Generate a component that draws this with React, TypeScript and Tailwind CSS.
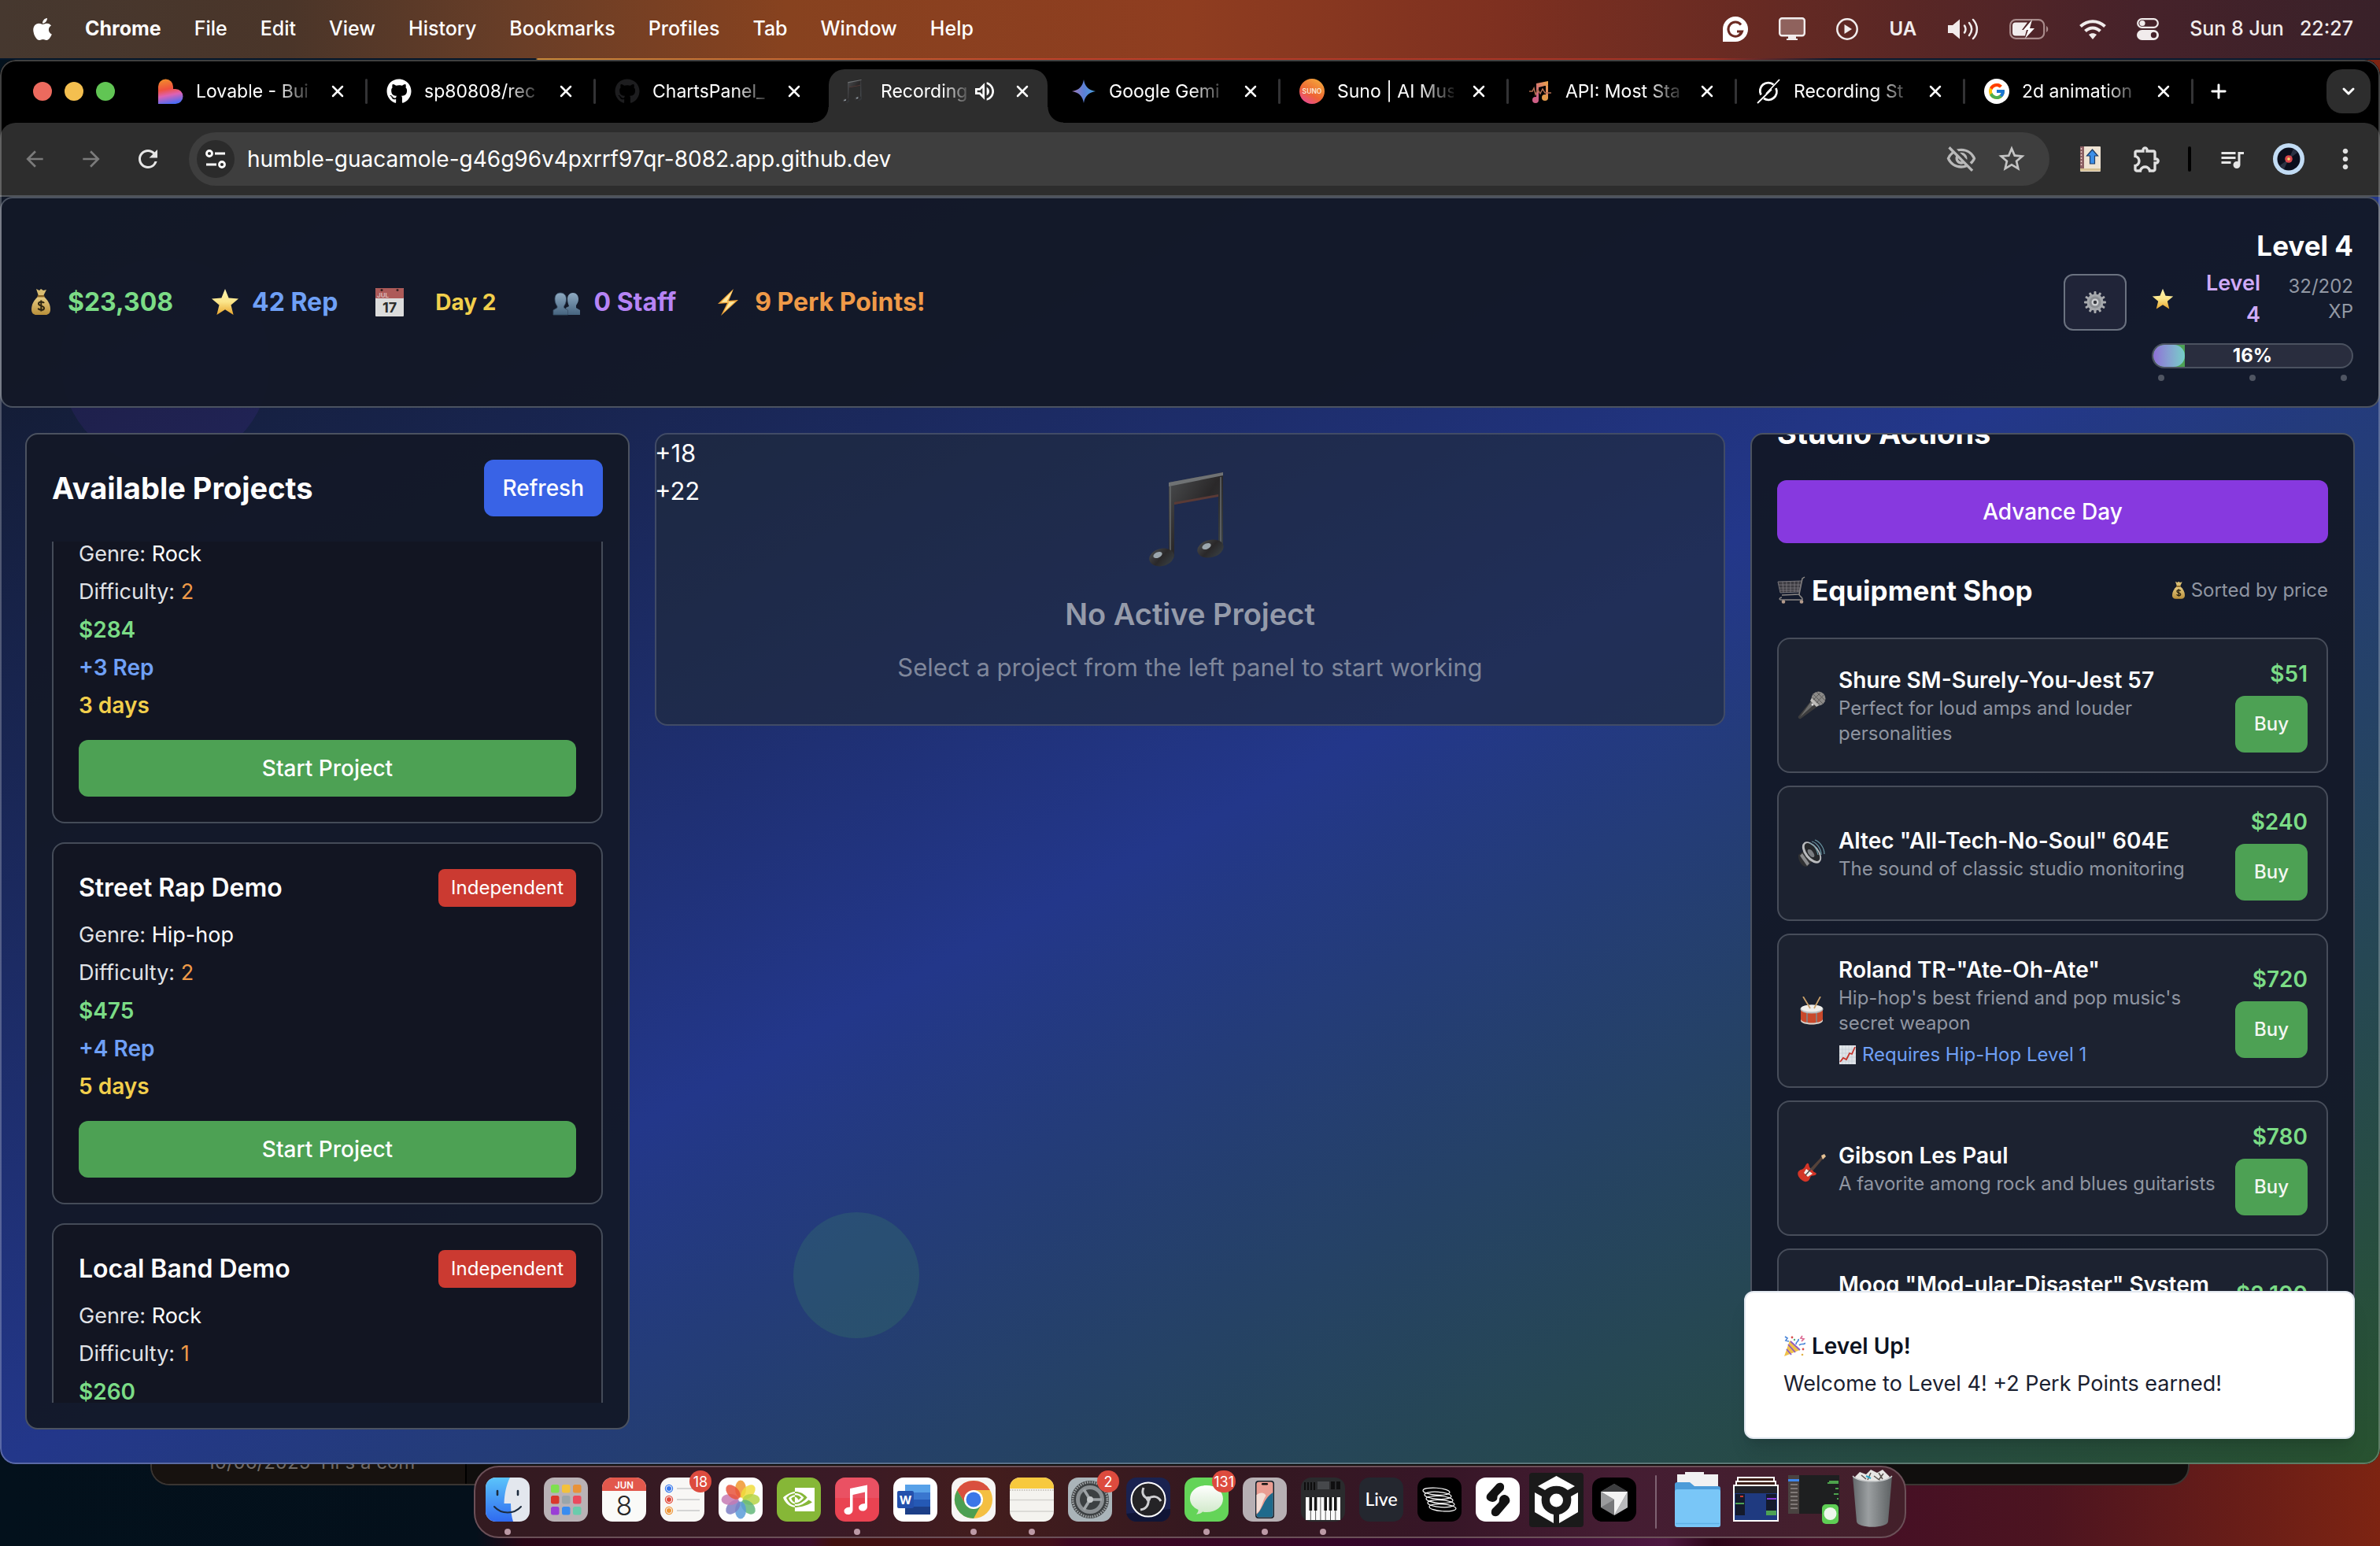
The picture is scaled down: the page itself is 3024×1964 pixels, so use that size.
import React from "react";
import { FaApple, FaGithub } from "react-icons/fa";
import { FcGoogle } from "react-icons/fc";
import {
  MdArrowBack,
  MdArrowForward,
  MdRefresh,
  MdOutlineVisibilityOff,
  MdStarBorder,
  MdOutlineExtension,
  MdQueueMusic,
  MdMoreVert,
  MdOutlineVolumeUp,
} from "react-icons/md";
import { BsNvidia } from "react-icons/bs";
import { X, Plus, ChevronDown } from "lucide-react";

/* ---------- Emoji-style drawings ---------- */

function Bag({ className = "size-9" }: { className?: string }) {
  return (
    <svg viewBox="0 0 36 36" className={className} aria-hidden="true">
      <defs>
        <linearGradient id="bag" x1="0" y1="0" x2="0" y2="1">
          <stop offset="0" stopColor="#e9cf86" />
          <stop offset="1" stopColor="#b98f3a" />
        </linearGradient>
      </defs>
      <path d="M12 1l4 2 2-2 3 2 4-1-4 8h-6z" fill="#d9bd72" />
      <path d="M15 10h6c6 5 9 11 9 17 0 5-3 7-6 7H12c-3 0-6-2-6-7 0-6 3-12 9-17z" fill="url(#bag)" />
      <rect x="13.500" y="9" width="9" height="2.600" rx="1.300" fill="#8a6424" />
      <path d="M22 19c-1-2-7-2.500-7 .8 0 3.600 7 2 7 5.600 0 3.300-6.500 3-7.500.3M18.300 15.500v14" fill="none" stroke="#2d2410" strokeWidth="2" />
    </svg>
  );
}

function Star({ className = "size-9" }: { className?: string }) {
  return (
    <svg viewBox="0 0 36 36" className={className} aria-hidden="true">
      <defs>
        <linearGradient id="star" x1="0" y1="0" x2="0" y2="1">
          <stop offset="0" stopColor="#fff3b0" />
          <stop offset=".5" stopColor="#fbe58a" />
          <stop offset="1" stopColor="#e8a52c" />
        </linearGradient>
      </defs>
      <path d="M18 1l4.600 11.500L35 13.500l-9.500 8L28.600 34 18 27.200 7.400 34l3.100-12.500L1 13.500l12.400-1z" fill="url(#star)" />
    </svg>
  );
}

function CalendarIcon() {
  return (
    <svg viewBox="0 0 36 36" className="size-9" aria-hidden="true">
      <rect width="36" height="36" rx="1" fill="#dcdcdc" />
      <rect width="36" height="13" rx="1" fill="#ad5a58" />
      <circle cx="8" cy="2.500" r="1.500" fill="#3a2020" />
      <circle cx="28" cy="2.500" r="1.500" fill="#3a2020" />
      <text x="2" y="11.500" fontSize="8" fill="#d9b4b4" fontFamily="Inter">JUL</text>
      <text x="18" y="31" fontSize="18" textAnchor="middle" fill="#2c2c2c" fontFamily="Inter">17</text>
    </svg>
  );
}

function People() {
  return (
    <svg viewBox="0 0 36 36" className="size-9" aria-hidden="true">
      <defs>
        <linearGradient id="ppl" x1="0" y1="0" x2="0" y2="1">
          <stop offset="0" stopColor="#8eaac2" />
          <stop offset="1" stopColor="#46647f" />
        </linearGradient>
      </defs>
      <path d="M26 6c4 0 7 3 7 8 0 4-2 6-3 8l0 3 5 3v6H18l-1-9 4-2c-1-3-2-5-2-9 0-5 3-8 7-8z" fill="url(#ppl)" />
      <path d="M10 6c4.500 0 7.500 3 7.500 8 0 4-1.500 7-3 9v2l5 3v6H1v-6l5-3v-2c-1.500-2-3-5-3-9 0-5 2.500-8 7-8z" fill="url(#ppl)" stroke="#3a5168" strokeWidth=".8" />
    </svg>
  );
}

function Bolt() {
  return (
    <svg viewBox="0 0 36 36" className="size-9" aria-hidden="true">
      <path d="M25 1L5 20l12-1L9 35l22-20-12 1z" fill="#f3a73a" />
      <path d="M24 3L9 18.500l11-1.500-7 13 14-13-11 1z" fill="#fde9a0" />
    </svg>
  );
}

function GearIcon() {
  const teeth = [0, 30, 60, 90, 120, 150, 180, 210, 240, 270, 300, 330];
  return (
    <svg viewBox="0 0 28 28" className="size-7" aria-hidden="true">
      {teeth.map((a) => (
        <rect key={a} x="12.500" y="0" width="3" height="6" rx="1" fill="#a9abae" transform={`rotate(${a} 14 14)`} />
      ))}
      <circle cx="14" cy="14" r="10.500" fill="#a5a8ac" />
      <circle cx="14" cy="14" r="7.500" fill="#8b8e93" />
      <circle cx="14" cy="14" r="4.500" fill="#cfd1d4" />
      <circle cx="14" cy="14" r="2.200" fill="#34363c" />
    </svg>
  );
}

function Note({ className = "" }: { className?: string }) {
  return (
    <svg viewBox="0 0 96 120" className={className} aria-hidden="true">
      <defs>
        <linearGradient id="note" x1="0" y1="0" x2="1" y2="1">
          <stop offset="0" stopColor="#4c4e50" />
          <stop offset=".5" stopColor="#2a2829" />
          <stop offset="1" stopColor="#3c4448" />
        </linearGradient>
      </defs>
      <path d="M25 13L94 0v98h-6V30L32 41v67h-7z" fill="url(#note)" />
      <path d="M25 13L94 0v4L25 18z" fill="#6f7274" />
      <path d="M32 38l56-10v3l-56 10z" fill="#5a3a36" />
      <path d="M27 17v88M91 6v86" stroke="#66696b" strokeWidth="1.500" />
      <ellipse cx="16" cy="108" rx="16" ry="11" transform="rotate(-14 16 108)" fill="url(#note)" />
      <ellipse cx="78" cy="97" rx="17" ry="11" transform="rotate(-14 78 97)" fill="url(#note)" />
      <ellipse cx="11" cy="105" rx="6" ry="3.500" fill="#9ba6ad" transform="rotate(-25 11 105)" />
      <ellipse cx="73" cy="94" rx="6" ry="3.500" fill="#9ba6ad" transform="rotate(-25 73 94)" />
    </svg>
  );
}

function Cart() {
  return (
    <svg viewBox="0 0 36 36" className="size-9" fill="none" aria-hidden="true">
      <path d="M35 1l-3 2-4 20-22 1" stroke="#8b8784" strokeWidth="1.500" />
      <path d="M1 7l30-1-3 14-24 1z" fill="#3c3b41" stroke="#77757a" />
      <path d="M2 11h28M3 15h27M4 18h25M7 7l1 14M12 7v14M17 7v14M22 6v14M27 6l-1 14" stroke="#858388" strokeWidth=".7" />
      <path d="M28 23c0 3 5 3 4 7H5c-3 0-2-3 1-3" stroke="#8b8784" strokeWidth="1.500" />
      <circle cx="8" cy="32.500" r="2.300" fill="#b59c8d" />
      <circle cx="31" cy="32.500" r="2.300" fill="#b59c8d" />
    </svg>
  );
}

function Mic() {
  return (
    <svg viewBox="0 0 36 36" className="size-9" aria-hidden="true">
      <path d="M18 11l8 8L4 35c-2 1-4-1-3-3z" fill="#3c3c3d" />
      <path d="M18 12l4 4L3 33z" fill="#6b6b6a" />
      <circle cx="26.500" cy="9.500" r="9" fill="#8b8a88" />
      <path d="M20 4l12 12M24 1l11 11M19 8l9 9M33 5L22 17M29 2L19 12" stroke="#5c5b5a" strokeWidth="1" />
      <path d="M18 9l9 9-3 2-8-8z" fill="#bdbbb8" />
      <circle cx="19" cy="17" r="1.500" fill="#ddd" />
    </svg>
  );
}

function Speaker() {
  return (
    <svg viewBox="0 0 36 36" className="size-9" aria-hidden="true">
      <path d="M1 20l8-6 10 14-7 7c-6 1-12-8-11-15z" fill="#303133" />
      <path d="M3 21l3-3 9 13-3 3z" fill="#8b8c8e" />
      <ellipse cx="18" cy="17" rx="9" ry="16" transform="rotate(-38 18 17)" fill="#b9bbbe" />
      <ellipse cx="18.500" cy="16.500" rx="6.500" ry="13.500" transform="rotate(-38 18.500 16.500)" fill="#26282b" />
      <ellipse cx="17" cy="18" rx="3" ry="6" transform="rotate(-38 17 18)" fill="#7a7d81" />
      <path d="M18 3c6 1 12 9 12 17M22 1c6 2 12 10 12 18M15 5c5 1 10 8 11 15" fill="none" stroke="#6c9aa6" strokeWidth="1.200" />
    </svg>
  );
}

function Drum() {
  return (
    <svg viewBox="0 0 36 36" className="size-9" aria-hidden="true">
      <path d="M4 15v15c2 7 26 7 28 0V15z" fill="#c9492b" />
      <path d="M12 19v15M24 19v15" stroke="#7d8a90" strokeWidth="1.500" />
      <path d="M4 29c2 6 26 6 28 0v2c-2 6-26 6-28 0z" fill="#d8d3cc" />
      <ellipse cx="18" cy="16" rx="14.500" ry="5.500" fill="#b9bdbf" />
      <ellipse cx="18" cy="15" rx="13.500" ry="4.500" fill="#f0efec" />
      <path d="M7 0l9 15M29 0l-8 15" stroke="#c9a06a" strokeWidth="1.800" />
    </svg>
  );
}

function Guitar() {
  return (
    <svg viewBox="0 0 36 36" className="size-9" aria-hidden="true">
      <path d="M15 20L31 3l2 2-15 18z" fill="#55423a" />
      <path d="M30 2l4-2 2 3-4 4z" fill="#e6c294" />
      <path d="M12 12c3-1 2 4 4 6l5 5c3 1 4 2 1 4-4 1-5 0-6 3-2 7-8 6-12 2-5-5-5-10 0-12 6-1 5-6 8-8z" fill="#d43527" />
      <path d="M11 19l8 6-6 4-5-5z" fill="#f2eeea" />
      <path d="M10 27l8-9" stroke="#4a4a4a" strokeWidth="1.500" />
    </svg>
  );
}

function ChartUp() {
  return (
    <svg viewBox="0 0 24 24" className="size-6" aria-hidden="true">
      <rect x="1" width="21" height="24" fill="#dfe3e8" />
      <path d="M5 0v24M9 0v24M13 0v24M17 0v24M1 5h21M1 10h21M1 15h21M1 20h21" stroke="#c3cad2" strokeWidth=".7" />
      <path d="M2 21l4-5 4 2 4-8 3 1 4-9" fill="none" stroke="#c5342c" strokeWidth="1.800" />
    </svg>
  );
}

function Party() {
  return (
    <svg viewBox="0 0 28 28" className="size-7" aria-hidden="true">
      <path d="M8 7l13 12L1 27z" fill="#f0c24b" />
      <path d="M6 12l9 10M4 18l6 7M9 8l12 11" stroke="#8f5bc0" strokeWidth="1.800" />
      <path d="M2 2l3 2-2 3 4 1M16 12c0-5 4-3 3-7M20 13c3-3 5 0 8-3" fill="none" stroke="#4b86d8" strokeWidth="1.700" />
      <path d="M24 1l-2 3 4 1-3 3" fill="none" stroke="#dc6a94" strokeWidth="1.700" />
      <circle cx="11" cy="3" r="1.400" fill="#d8504c" />
      <circle cx="25" cy="18" r="1.400" fill="#d8504c" />
      <circle cx="24" cy="25" r="1.300" fill="#e0b24a" />
      <circle cx="14" cy="6" r="1.200" fill="#56b07a" />
    </svg>
  );
}

/* ---------- Browser drawings ---------- */

function LovableLogo() {
  return (
    <svg viewBox="0 0 32 32" className="size-8" aria-hidden="true">
      <defs>
        <linearGradient id="lov" x1=".3" y1="0" x2=".5" y2="1">
          <stop offset="0" stopColor="#f08a2c" />
          <stop offset=".4" stopColor="#f0513f" />
          <stop offset=".65" stopColor="#dd62b4" />
          <stop offset="1" stopColor="#4a6cf5" />
        </linearGradient>
      </defs>
      <path d="M0 32V10a9.500 9.500 0 0 1 19 0v3h3a9.500 9.500 0 0 1 0 19z" fill="url(#lov)" />
    </svg>
  );
}

function GeminiLogo() {
  return (
    <svg viewBox="0 0 32 32" className="size-8" aria-hidden="true">
      <defs>
        <linearGradient id="gem" x1="0" y1="0" x2="1" y2="0">
          <stop offset="0" stopColor="#a47bb8" />
          <stop offset=".5" stopColor="#5b7fd6" />
          <stop offset="1" stopColor="#4aa0dc" />
        </linearGradient>
      </defs>
      <path d="M16 1c1.500 9 6 13.500 15 15-9 1.500-13.500 6-15 15-1.500-9-6-13.500-15-15 9-1.500 13.500-6 15-15z" fill="url(#gem)" />
    </svg>
  );
}

function SunoLogo() {
  return (
    <svg viewBox="0 0 32 32" className="size-8" aria-hidden="true">
      <defs>
        <linearGradient id="suno" x1=".8" y1="0" x2=".2" y2="1">
          <stop offset="0" stopColor="#f3a83b" />
          <stop offset=".6" stopColor="#ee6434" />
          <stop offset="1" stopColor="#e8489a" />
        </linearGradient>
      </defs>
      <circle cx="16" cy="16" r="16" fill="url(#suno)" />
      <text x="16" y="19" fontSize="8.500" fontWeight="600" textAnchor="middle" fill="#fbe9d8" fontFamily="Inter">SUNO</text>
    </svg>
  );
}

function ApiNote() {
  return (
    <svg viewBox="0 0 32 32" className="size-8" fill="none" aria-hidden="true">
      <defs>
        <linearGradient id="apin" x1="0" y1="1" x2="1" y2="0">
          <stop offset="0" stopColor="#c85a8e" />
          <stop offset="1" stopColor="#eda545" />
        </linearGradient>
      </defs>
      <path d="M11 6l15-3v5l-12 3v15h-3zM23 7h3v18h-3z" fill="url(#apin)" />
      <circle cx="10" cy="27" r="4" fill="#cf5f86" />
      <circle cx="22" cy="24" r="4" fill="#e39a4c" />
      <path d="M2 16h4l2-4 2 8 3-6 3 5 3-6 3 5h8" stroke="#b06c50" strokeWidth="1.500" />
    </svg>
  );
}

function GrokLogo() {
  return (
    <svg viewBox="0 0 32 32" className="size-8" fill="none" aria-hidden="true">
      <path d="M22.500 7.500A10.500 10.500 0 0 0 6.500 20.500M10 25A10.500 10.500 0 0 0 25.500 12" stroke="#fff" strokeWidth="2.800" />
      <path d="M30 1L13 19M20 13.500L2 31" stroke="#fff" strokeWidth="1.800" />
    </svg>
  );
}

function GoogleLogo() {
  return (
    <span className="flex size-8 items-center justify-center rounded-full bg-white">
      <FcGoogle className="size-6" />
    </span>
  );
}

type TabInfo = { title: string; icon: React.ReactNode; active?: boolean; divider?: boolean };

const tabs: TabInfo[] = [
  { title: "Lovable - Bui", icon: <LovableLogo />, divider: true },
  { title: "sp80808/rec", icon: <FaGithub className="size-8 text-white" />, divider: true },
  { title: "ChartsPanel_", icon: <FaGithub className="size-8 text-[#1d1d1f]" /> },
  { title: "Recording", icon: <Note className="h-8 w-6" />, active: true },
  { title: "Google Gemi", icon: <GeminiLogo />, divider: true },
  { title: "Suno | AI Mus", icon: <SunoLogo />, divider: true },
  { title: "API: Most Sta", icon: <ApiNote />, divider: true },
  { title: "Recording St", icon: <GrokLogo />, divider: true },
  { title: "2d animation", icon: <GoogleLogo />, divider: true },
];

function BrowserTab({ tab }: { tab: TabInfo }) {
  return (
    <div className="relative flex h-full max-w-[290px] min-w-0 flex-1 items-center pr-[26px] pl-6">
      {tab.active && (
        <>
          <span className="absolute inset-x-[6px] top-3 bottom-0 rounded-t-[20px] bg-[#2d2d2d]" />
          <span className="absolute bottom-0 -left-[14px] size-5 bg-[radial-gradient(circle_at_0_0,transparent_19px,#2d2d2d_20px)]" />
          <span className="absolute -right-[14px] bottom-0 size-5 bg-[radial-gradient(circle_at_100%_0,transparent_19px,#2d2d2d_20px)]" />
        </>
      )}
      <button className="relative flex min-w-0 flex-1 items-center text-left">
        <span className="mr-4 flex w-8 shrink-0">{tab.icon}</span>
        <span className="min-w-0 flex-1 text-[23px] whitespace-nowrap text-white [mask-image:linear-gradient(to_right,black_70%,transparent_104%)]">
          {tab.title}
        </span>
        {tab.active && <MdOutlineVolumeUp className="ml-1 size-8 shrink-0 text-white" />}
      </button>
      <button aria-label={`Close ${tab.title}`} className="relative ml-5">
        <X className="size-6 text-white" strokeWidth={2.5} />
      </button>
      {tab.divider && <span className="absolute right-0 h-8 w-[3px] rounded-full bg-[#333335]" />}
    </div>
  );
}

function TabStrip() {
  return (
    <div className="flex h-20 shrink-0 items-center bg-black">
      <div className="flex w-[177px] shrink-0 gap-4 pl-[42px]">
        <button aria-label="Close window" className="size-6 rounded-full bg-[#ec6a5e]" />
        <button aria-label="Minimize window" className="size-6 rounded-full bg-[#f4bf4f]" />
        <button aria-label="Zoom window" className="size-6 rounded-full bg-[#61c554]" />
      </div>
      <div className="flex h-full min-w-0 flex-1">
        {tabs.map((t, i) => (
          <BrowserTab key={i} tab={t} />
        ))}
        <button aria-label="New tab" className="flex w-16 items-center justify-center">
          <Plus className="size-7 text-white" strokeWidth={2.5} />
        </button>
      </div>
      <button aria-label="Search tabs" className="mr-3 flex size-14 items-center justify-center rounded-[20px] bg-[#2d2d2d]">
        <ChevronDown className="size-6 text-white" strokeWidth={3} />
      </button>
    </div>
  );
}

function ToolButton({ label, children }: { label: string; children: React.ReactNode }) {
  return (
    <button aria-label={label} className="flex w-[72px] shrink-0 items-center justify-center">
      {children}
    </button>
  );
}

function Toolbar() {
  return (
    <div className="flex h-[94px] shrink-0 items-center rounded-t-[20px] border-b-2 border-[#50545a] bg-[#2d2d2d] px-2">
      <ToolButton label="Back"><MdArrowBack className="size-8 text-[#7b7b7b]" /></ToolButton>
      <ToolButton label="Forward"><MdArrowForward className="size-8 text-[#7b7b7b]" /></ToolButton>
      <ToolButton label="Reload"><MdRefresh className="size-9 text-[#e6e6e6]" /></ToolButton>
      <div className="mx-4 flex h-[68px] min-w-0 flex-1 items-center rounded-full bg-[#3e3e3e] pr-7 pl-[10px]">
        <button aria-label="Site information" className="flex size-12 items-center justify-center rounded-full bg-[#2b2b2b]">
          <svg viewBox="0 0 28 28" className="size-7" fill="none" stroke="#fff" strokeWidth="2.800" aria-hidden="true">
            <circle cx="6" cy="7" r="3.500" />
            <path d="M13 7h13M2 21h13" />
            <circle cx="22" cy="21" r="3.500" />
          </svg>
        </button>
        <input
          aria-label="Address"
          defaultValue="humble-guacamole-g46g96v4pxrrf97qr-8082.app.github.dev"
          className="ml-4 min-w-0 flex-1 bg-transparent text-[28px] text-white outline-none"
        />
        <MdOutlineVisibilityOff className="size-10 text-[#b9b9b9]" />
        <MdStarBorder className="ml-6 size-10 text-[#c4c4c4]" />
      </div>
      <ToolButton label="Bookmark extension">
        <svg viewBox="0 0 26 32" className="h-8 w-[26px]" aria-hidden="true">
          <rect width="26" height="32" rx="1" fill="#efe3d3" />
          <rect width="5" height="28" fill="#8c5f63" />
          <path d="M1.500 2v24" stroke="#e8c9c4" strokeWidth="1.500" strokeDasharray="2 2" />
          <rect y="28" width="26" height="3" fill="#d6c093" />
          <path d="M15.500 4l7 8h-4v10h-6V12h-4z" fill="#3e8fe8" stroke="#1e3c68" strokeWidth="1.200" />
        </svg>
      </ToolButton>
      <ToolButton label="Extensions"><MdOutlineExtension className="size-10 text-[#e0e0e0]" /></ToolButton>
      <span className="mx-4 h-8 w-1 shrink-0 rounded-full bg-black" />
      <ToolButton label="Media controls"><MdQueueMusic className="size-9 text-[#e6e6e6]" /></ToolButton>
      <ToolButton label="Profile">
        <svg viewBox="0 0 40 40" className="size-10" aria-hidden="true">
          <circle cx="20" cy="20" r="20" fill="#c2dcf4" />
          <circle cx="20" cy="20" r="14.500" fill="#0b0e1c" />
          <path d="M20 20l6-13a14 14 0 0 1 5 5zM20 20l-6 13a14 14 0 0 1-5-5z" fill="#2b3142" />
          <circle cx="20" cy="20" r="4.800" fill="#d9474c" />
          <circle cx="20" cy="20" r="1.800" fill="#f5dc6c" />
        </svg>
      </ToolButton>
      <ToolButton label="Chrome menu"><MdMoreVert className="size-10 text-[#e0e0e0]" /></ToolButton>
    </div>
  );
}

/* ---------- Mac menu bar ---------- */

const menus = ["File", "Edit", "View", "History", "Bookmarks", "Profiles", "Tab", "Window", "Help"];

function MenuBar() {
  return (
    <header className="relative flex h-[74px] shrink-0 items-center justify-between bg-[linear-gradient(to_right,#46382f_0%,#4a3529_12%,#6a3e27_22%,#87421f_33%,#8f3d20_50%,#7e3020_63%,#5e2824_78%,#46222a_90%,#392129_100%)] pr-[34px] pl-[38px] text-[25px] text-white">
      <nav className="flex items-center gap-[42px] font-medium">
        <button aria-label="Apple menu" className="w-7"><FaApple className="size-8" /></button>
        <button className="font-bold">Chrome</button>
        {menus.map((m) => (
          <button key={m}>{m}</button>
        ))}
      </nav>
      <div className="flex items-center gap-[39px] font-medium text-[#f1ecec]">
        <svg viewBox="0 0 32 32" className="size-8" fill="none" aria-hidden="true">
          <path d="M16 0a16 16 0 1 1 0 32H0V16A16 16 0 0 1 16 0z" fill="#fff" />
          <path d="M23 10.500A9 9 0 1 0 24.500 19H18" stroke="#6b2a22" strokeWidth="3" />
          <path d="M21 22l4-3" stroke="#6b2a22" strokeWidth="2" />
        </svg>
        <svg viewBox="0 0 34 30" className="h-[30px] w-[34px]" aria-hidden="true">
          <rect x="1.200" y="1.200" width="31.600" height="22" rx="3" fill="#8f625d" stroke="#f1ecec" strokeWidth="2.400" />
          <path d="M12 24h10v3h2v2H10v-2h2z" fill="#f1ecec" />
        </svg>
        <svg viewBox="0 0 28 28" className="size-7" aria-hidden="true">
          <circle cx="14" cy="14" r="12.700" fill="none" stroke="#f1ecec" strokeWidth="2.500" />
          <path d="M10.500 8l9.500 6-9.500 6z" fill="#f1ecec" />
        </svg>
        <span className="text-2xl font-semibold">UA</span>
        <svg viewBox="0 0 40 28" className="h-7 w-10" fill="none" stroke="#f1ecec" strokeWidth="2.500" strokeLinecap="round" aria-hidden="true">
          <path d="M1 9h6l9-7.500v25L7 19H1z" fill="#f1ecec" stroke="none" />
          <path d="M22 9.500c2 3 2 6 0 9M28 6c4 5 4 11 0 16M33 2c6.500 7 6.500 17 0 24" />
        </svg>
        <svg viewBox="0 0 50 26" className="h-[26px] w-[50px]" aria-hidden="true">
          <rect x="1.200" y="1.200" width="43" height="23.600" rx="7" fill="none" stroke="#a98b8b" strokeWidth="2.200" />
          <path d="M47 9c3 1.500 3 6.500 0 8z" fill="#a98b8b" />
          <path d="M8 4.500h15L16 14h6l-2 7.500H8a4 4 0 0 1-4-4v-9a4 4 0 0 1 4-4z" fill="#f1ecec" />
          <path d="M29 1L18 14h6l-4 11 12-13h-6z" fill="#fff" />
        </svg>
        <svg viewBox="0 0 34 26" className="h-[26px] w-[34px]" fill="none" stroke="#f1ecec" strokeWidth="4" aria-hidden="true">
          <path d="M1.500 9.500c9-8.500 22-8.500 31 0M7.500 15.500c5.500-5.500 13.500-5.500 19 0" />
          <path d="M17 26l-5-6c3-2.500 7-2.500 10 0z" fill="#f1ecec" stroke="none" />
        </svg>
        <svg viewBox="0 0 28 28" className="size-7" aria-hidden="true">
          <rect x="1.200" y="1.200" width="25.600" height="10.600" rx="5.300" fill="none" stroke="#f1ecec" strokeWidth="2.200" />
          <circle cx="7" cy="6.500" r="3.600" fill="#f1ecec" />
          <path fillRule="evenodd" d="M6.500 15h15a6.500 6.500 0 0 1 0 13h-15a6.500 6.500 0 0 1 0-13zm15 2.800a3.700 3.700 0 1 0 0 7.400 3.700 3.700 0 0 0 0-7.400z" fill="#f1ecec" />
        </svg>
        <span className="flex gap-5"><span>Sun 8 Jun</span><span>22:27</span></span>
      </div>
    </header>
  );
}

/* ---------- Game page ---------- */

function StatsHeader() {
  return (
    <header className="relative flex items-center justify-between rounded-[16px] border-2 border-[#4b5260] bg-[#131827]/95 p-8">
      <div className="flex items-center gap-12 text-[32px] leading-10 font-bold">
        <span className="flex items-center gap-4 text-[#7bdc86]"><Bag />$23,308</span>
        <span className="flex items-center gap-4 text-[#6fa0f6]"><Star />42 Rep</span>
        <span className="flex items-center gap-4"><CalendarIcon /><span className="px-6 text-[28px] text-[#f2cf4c]">Day 2</span></span>
        <span className="flex items-center gap-4 text-[#b684f5]"><People />0 Staff</span>
        <span className="flex items-center gap-4 text-[#ef9a48]"><Bolt />9 Perk Points!</span>
      </div>
      <div className="flex items-center gap-8">
        <button aria-label="Settings" className="flex h-[72px] w-20 items-center justify-center rounded-[12px] border-2 border-[#6b7280] bg-[#202438]">
          <GearIcon />
        </button>
        <div className="w-64 text-right">
          <h1 className="text-[35px] leading-[56px] font-bold text-white">Level 4</h1>
          <div className="flex h-20 items-center">
            <Star className="size-7" />
            <span className="w-[110px] text-[27px] leading-10 font-semibold text-[#d0abf8]">Level<br />4</span>
            <span className="flex-1 text-2xl leading-8 text-[#9298a4]">32/202<br />XP</span>
          </div>
          <div
            role="progressbar"
            aria-label="Level progress"
            aria-valuenow={16}
            className="relative mt-4 flex h-8 items-center justify-center overflow-hidden rounded-full border-2 border-[#4b5260] bg-[#292d3e]"
          >
            <span className="absolute inset-y-0 left-0 w-[16%] bg-[#4da154]" />
            <span className="absolute inset-y-0 left-0 w-[16%] rounded-full bg-linear-to-r from-[#8d6fd6] to-[#74cfc8]" />
            <span className="relative text-2xl font-bold text-white">16%</span>
          </div>
          <div className="mx-2 mt-2 flex justify-between">
            <span className="size-2 rounded-full bg-[#4f5562]" />
            <span className="size-2 rounded-full bg-[#4f5562]" />
            <span className="size-2 rounded-full bg-[#4f5562]" />
          </div>
        </div>
      </div>
    </header>
  );
}

type Project = { title?: string; genre: string; difficulty: number; pay: string; rep?: string; days?: string };

const projects: Project[] = [
  { genre: "Rock", difficulty: 2, pay: "$284", rep: "+3 Rep", days: "3 days" },
  { title: "Street Rap Demo", genre: "Hip-hop", difficulty: 2, pay: "$475", rep: "+4 Rep", days: "5 days" },
  { title: "Local Band Demo", genre: "Rock", difficulty: 1, pay: "$260" },
];

function ProjectCard({ project }: { project: Project }) {
  return (
    <article className={project.title ? "rounded-[16px] border-2 border-[#444b58] bg-[#121522] p-8" : "rounded-b-[16px] border-2 border-t-0 border-[#444b58] bg-[#121522] px-8 pb-8"}>
      {project.title && (
        <div className="mb-4 flex items-center justify-between">
          <h3 className="text-[32px] leading-[48px] font-semibold text-white">{project.title}</h3>
          <span className="rounded-[8px] bg-[#cb3a31] px-4 text-2xl leading-[48px] text-white">Independent</span>
        </div>
      )}
      <div className="flex flex-col gap-2 text-[28px] leading-10">
        <p className="text-[27px] text-[#e1e3e7]">Genre: <span className="text-white">{project.genre}</span></p>
        <p className="text-[27px] text-[#e1e3e7]">Difficulty: <span className="text-[#ef9a48]">{project.difficulty}</span></p>
        <p className="font-semibold text-[#7bdc86]">{project.pay}</p>
        {project.rep && <p className="font-semibold text-[#6fa0f6]">{project.rep}</p>}
        {project.days && <p className="font-semibold text-[#f2cf4c]">{project.days}</p>}
      </div>
      {project.days && (
        <button className="mt-6 h-[72px] w-full rounded-[12px] bg-[#4da154] text-[28px] font-medium text-white">Start Project</button>
      )}
    </article>
  );
}

function ProjectsPanel() {
  return (
    <section className="flex min-h-0 w-[768px] shrink-0 flex-col rounded-[16px] border-2 border-[#4b5260] bg-[#131827]/95 p-8">
      <div className="mb-8 flex items-center justify-between">
        <h2 className="text-[38px] font-bold text-white">Available Projects</h2>
        <button className="h-[72px] rounded-[12px] bg-[#3963e6] px-6 text-[28px] font-medium text-white">Refresh</button>
      </div>
      <div className="min-h-0 flex-1 overflow-hidden">
        <div className="-mt-1 flex flex-col gap-6">
          {projects.map((p, i) => (
            <ProjectCard key={i} project={p} />
          ))}
        </div>
      </div>
    </section>
  );
}

function ActiveProjectPanel() {
  return (
    <section className="relative flex flex-1 flex-col items-center self-start rounded-[16px] border-2 border-[#414b66] bg-[#1f2937]/60 p-12 text-center">
      <Note className="mr-2 h-[120px] w-24" />
      <h2 className="mt-8 mb-4 text-[38px] leading-[56px] font-semibold text-[#959baa]">No Active Project</h2>
      <p className="text-[31px] leading-[48px] text-[#7f879b]">Select a project from the left panel to start working</p>
      <div className="absolute top-0 -left-0.5 text-left text-[31px] leading-[48px] text-white">
        <p>+18</p>
        <p>+22</p>
      </div>
    </section>
  );
}

type Equipment = { name: string; lines: string[]; price: string; icon?: React.ReactNode; requires?: string };

const equipment: Equipment[] = [
  { name: "Shure SM-Surely-You-Jest 57", lines: ["Perfect for loud amps and louder", "personalities"], price: "$51", icon: <Mic /> },
  { name: 'Altec "All-Tech-No-Soul" 604E', lines: ["The sound of classic studio monitoring"], price: "$240", icon: <Speaker /> },
  { name: 'Roland TR-"Ate-Oh-Ate"', lines: ["Hip-hop's best friend and pop music's", "secret weapon"], price: "$720", icon: <Drum />, requires: "Requires Hip-Hop Level 1" },
  { name: "Gibson Les Paul", lines: ["A favorite among rock and blues guitarists"], price: "$780", icon: <Guitar /> },
  { name: 'Moog "Mod-ular-Disaster" System', lines: [], price: "$2,100" },
];

function EquipmentCard({ item }: { item: Equipment }) {
  return (
    <li className="flex items-center rounded-[16px] border-2 border-[#474d5a] bg-[#1c2230] p-6">
      <span className="w-[52px] shrink-0">{item.icon}</span>
      <div className={item.lines.length ? "min-w-0 flex-1 whitespace-nowrap" : "min-h-36 min-w-0 flex-1 whitespace-nowrap"}>
        <h3 className="text-[28px] leading-10 font-semibold text-white">{item.name}</h3>
        {item.lines.map((l) => (
          <p key={l} className="text-2xl leading-8 text-[#8f95a1]">{l}</p>
        ))}
        {item.requires && (
          <p className="mt-2 flex items-center gap-1.5 text-2xl leading-8 text-[#6fa0f6]"><ChartUp />{item.requires}</p>
        )}
      </div>
      <div className="flex flex-col items-end gap-2">
        <span className="text-[28px] leading-10 font-semibold text-[#7bdc86]">{item.price}</span>
        <button aria-label={`Buy ${item.name}`} className="h-[72px] w-[92px] rounded-[12px] bg-[#4da154] text-2xl font-medium text-[#f4f7f2]">Buy</button>
      </div>
    </li>
  );
}

function StudioPanel() {
  return (
    <section className="min-h-0 w-[768px] shrink-0 overflow-hidden rounded-[16px] border-2 border-[#4b5260] bg-[#131827]/95 px-8">
      <h2 className="-mt-[30px] mb-8 text-[38px] leading-[56px] font-bold text-white">Studio Actions</h2>
      <button className="h-20 w-full rounded-[12px] bg-[#8739df] text-[28px] font-medium text-white">Advance Day</button>
      <div className="my-8 flex items-center justify-between">
        <h3 className="flex items-center gap-2 text-[35px] leading-[56px] font-bold text-white"><Cart />Equipment Shop</h3>
        <span className="flex items-center gap-1 text-2xl text-[#8f95a1]"><Bag className="size-6" />Sorted by price</span>
      </div>
      <ul className="flex flex-col gap-4">
        {equipment.map((e) => (
          <EquipmentCard key={e.name} item={e} />
        ))}
      </ul>
    </section>
  );
}

function GamePage() {
  return (
    <main className="relative flex min-h-0 flex-1 flex-col overflow-hidden bg-[linear-gradient(to_bottom_right,#111827,#23378a,#28522f)]">
      <span className="absolute top-[78px] left-[77px] size-[266px] rounded-full bg-[#7c3aed]/10" />
      <span className="absolute bottom-[160px] left-1/3 size-40 rounded-full bg-[#3f9a5f]/20" />
      <StatsHeader />
      <div className="relative flex min-h-0 flex-1 gap-8 px-8 pt-8 pb-11">
        <ProjectsPanel />
        <ActiveProjectPanel />
        <StudioPanel />
      </div>
      <aside role="status" className="absolute right-8 bottom-8 w-[776px] rounded-[12px] border-2 border-[#e2e8f0] bg-white p-12 text-[28px] leading-10 shadow-xl">
        <p className="mb-2 flex items-center gap-2 font-semibold text-[#0b1220]"><Party />Level Up!</p>
        <p className="text-[27px] text-[#1b2130]">Welcome to Level 4! +2 Perk Points earned!</p>
      </aside>
    </main>
  );
}

/* ---------- Dock ---------- */

function Tile({ fill, children }: { fill: string; children?: React.ReactNode }) {
  return (
    <svg viewBox="0 0 56 56" className="size-14 overflow-hidden rounded-[13px]" aria-hidden="true">
      <rect width="56" height="56" fill={fill} />
      {children}
    </svg>
  );
}

const launchColors = ["#7fe04f", "#f3c13c", "#e8923a", "#d9382c", "#9aa5aa", "#ea4a5e", "#9a3fd6", "#3a8cf0", "#6accac"];
const petals = ["#f0962e", "#f0dc3c", "#b5d344", "#63b77a", "#5b9bd8", "#7d7fc4", "#c57ab4", "#e8533c"];

const FinderIcon = (
  <Tile fill="#e3e7ee">
    <defs>
      <linearGradient id="find" x1="0" y1="0" x2="0" y2="1"><stop offset="0" stopColor="#5bc4fa" /><stop offset="1" stopColor="#2f6af0" /></linearGradient>
    </defs>
    <path d="M0 0h31c-5 10-7 21-7.500 33H32c0 9 1 17 3 23H0z" fill="url(#find)" />
    <path d="M15 17v5M41 17v5" stroke="#1c2b3d" strokeWidth="2.600" strokeLinecap="round" />
    <path d="M11 37c9 10 25 10 34 0" fill="none" stroke="#1c2b3d" strokeWidth="2" strokeLinecap="round" />
  </Tile>
);

const LaunchpadIcon = (
  <Tile fill="#b9b2b6">
    {launchColors.map((c, i) => (
      <rect key={c} x={9 + (i % 3) * 14} y={9 + Math.floor(i / 3) * 14} width="10.500" height="10.500" rx="2.500" fill={c} />
    ))}
  </Tile>
);

const CalendarDock = (
  <Tile fill="#fafaf8">
    <rect width="56" height="17" fill="#e2584c" />
    <text x="28" y="13.500" fontSize="11.500" fontWeight="600" textAnchor="middle" fill="#fff" fontFamily="Inter">JUN</text>
    <text x="28" y="48" fontSize="34" fontWeight="300" textAnchor="middle" fill="#262626" fontFamily="Inter">8</text>
  </Tile>
);

const RemindersIcon = (
  <Tile fill="#f8f7f5">
    {["#3578f0", "#e34a3c", "#ee9536"].map((c, i) => (
      <g key={c}>
        <circle cx="11" cy={14 + i * 14} r="4.600" fill="none" stroke={c} strokeWidth="1.200" />
        <circle cx="11" cy={14 + i * 14} r="3" fill={c} />
        <path d={`M21 ${14 + i * 14}h29`} stroke="#c9c8c8" strokeWidth="1.500" />
      </g>
    ))}
  </Tile>
);

const PhotosIcon = (
  <Tile fill="#fdfdfd">
    {petals.map((c, i) => (
      <ellipse key={c} cx="28" cy="14.500" rx="7" ry="11" fill={c} fillOpacity=".85" transform={`rotate(${i * 45} 28 28)`} />
    ))}
  </Tile>
);

const NvidiaIcon = (
  <span className="flex size-14 items-center justify-center rounded-[13px] bg-[#86b737]"><BsNvidia className="size-10 text-white" /></span>
);

const MusicIcon = (
  <Tile fill="#ea4352">
    <rect width="56" height="26" fill="#ea6074" fillOpacity=".5" />
    <path d="M19 14l22-4.500v27c0 4-3 6-6 6s-5-1.800-5-4.200c0-3 3-4.800 8-5.300V18.500L22.500 22v19c0 4-3 6-6 6s-5-1.800-5-4.200c0-3 2.500-4.800 7.500-5.300z" fill="#fff" />
  </Tile>
);

const WordIcon = (
  <Tile fill="#fff">
    <rect x="15" y="9" width="32" height="10" fill="#58a1e8" />
    <rect x="15" y="19" width="32" height="9" fill="#3a76cf" />
    <rect x="15" y="28" width="32" height="9" fill="#2559b5" />
    <rect x="15" y="37" width="32" height="10" fill="#1c3f88" />
    <rect x="5" y="17" width="21" height="22" rx="2" fill="#2450ac" />
    <text x="15.500" y="33.500" fontSize="15" fontWeight="700" textAnchor="middle" fill="#fff" fontFamily="Inter">W</text>
  </Tile>
);

const ChromeIcon = (
  <Tile fill="#f6f5f4">
    <circle cx="28" cy="28" r="24" fill="#f4bf42" />
    <path d="M7.200 16A24 24 0 0 0 28 52l10-18-20 0z" fill="#4c9f52" />
    <path d="M28 16h20.800A24 24 0 0 0 7.200 16L18 34z" fill="#d9503f" />
    <circle cx="28" cy="28" r="12" fill="#fff" />
    <circle cx="28" cy="28" r="9.500" fill="#3b77e8" />
  </Tile>
);

const NotesIcon = (
  <Tile fill="#f4f3ef">
    <rect width="56" height="14" fill="#f7c93e" />
    <path d="M0 16h56" stroke="#bdbab2" strokeWidth="1.500" strokeDasharray="1.500 1.500" />
    <path d="M0 28.500h56M0 43h56" stroke="#d4d3d0" strokeWidth="1.500" />
  </Tile>
);

const SettingsIcon = (
  <Tile fill="#aab4b9">
    <circle cx="28" cy="28" r="24" fill="#3c4042" />
    <circle cx="28" cy="28" r="22" fill="none" stroke="#9da1a3" strokeWidth="3" strokeDasharray="1.700 1.300" />
    <circle cx="28" cy="28" r="15.500" fill="none" stroke="#8b9093" strokeWidth="5" />
    <path d="M28 28h15M28 28l-8-13M28 28l-8 13" stroke="#9ea3a6" strokeWidth="3.500" />
    <circle cx="28" cy="28" r="4" fill="#c2c6c8" />
  </Tile>
);

const ObsIcon = (
  <Tile fill="#1a2250">
    <path d="M0 46l56-6v16H0z" fill="#101536" />
    <circle cx="28" cy="28" r="21.500" fill="#242326" stroke="#fff" strokeWidth="2" />
    <path d="M28 27c-6-2-9-7-6-14M28 27c5-4 12-4 16 3M28 27c1 7-2 13-10 14" fill="none" stroke="#cfcfd2" strokeWidth="3" />
    <circle cx="28" cy="27" r="3" fill="#cfcfd2" />
  </Tile>
);

const MessagesIcon = (
  <Tile fill="#64d458">
    <defs>
      <linearGradient id="msg" x1="0" y1="0" x2="0" y2="1"><stop offset="0" stopColor="#fff" /><stop offset="1" stopColor="#cfe8c8" /></linearGradient>
    </defs>
    <path d="M28 10c12 0 21 7 21 17s-9 17-21 17c-2 0-3 0-5-.5-2 2-5 3-8 3 2-2 2.500-3.500 2.500-5.500C11 38 7 33 7 27c0-10 9-17 21-17z" fill="url(#msg)" />
  </Tile>
);

const PhoneIcon = (
  <Tile fill="#b7b0b4">
    <rect x="16" y="4" width="24" height="48" rx="4" fill="#15222c" />
    <rect x="17.500" y="5.500" width="21" height="45" rx="3" fill="#ea9d92" />
    <path d="M38.500 19v28a3 3 0 0 1-3 3.500h-15a3 3 0 0 1-3-3.500c8-6 9-21 21-28z" fill="#1e6a8c" />
    <path d="M17.500 46c7-5 7-16 12-23-3-6-9-3-12-1z" fill="#f4ded6" />
    <rect x="24" y="7" width="8" height="2.500" rx="1.200" fill="#111" />
  </Tile>
);

const KeysIcon = (
  <Tile fill="#2a2b2d">
    <path d="M5 6v10M9 6v10M13 6v10M17 6v10" stroke="#0d0d0d" strokeWidth="2" />
    <rect x="21" y="5" width="15" height="10" fill="#46484b" />
    <rect x="38" y="5" width="5" height="10" fill="#0f0f10" />
    <rect x="45" y="5" width="5" height="10" fill="#0f0f10" />
    <rect x="6" y="25" width="44" height="29" fill="#fbfbfb" />
    <path d="M12.300 25v29M18.600 25v29M24.900 25v29M31.200 25v29M37.500 25v29M43.800 25v29" stroke="#555" strokeWidth="1" />
    <path d="M12.300 25v17M18.600 25v17M31.200 25v17M37.500 25v17M43.800 25v17" stroke="#161616" strokeWidth="3.600" />
  </Tile>
);

const LiveIcon = (
  <Tile fill="#24272f">
    <text x="28" y="36" fontSize="23" fontWeight="500" textAnchor="middle" fill="#fff" fontFamily="Lato">Live</text>
  </Tile>
);

const CoilIcon = (
  <Tile fill="#000">
    {[18, 23, 28, 33, 38].map((y, i) => (
      <ellipse key={y} cx={24 + i * 2} cy={y} rx="17" ry="4.500" fill="none" stroke="#fff" strokeWidth="1.200" transform={`rotate(4 28 ${y})`} />
    ))}
  </Tile>
);

const SLogoIcon = (
  <Tile fill="#fff">
    <path d="M27 8c5-3 10 0 9 5 0 2-1 3-2 4l-6 6c-1 2 0 5-2 6-4 4-10 1-12-2-1-3 0-5 2-7z" fill="#121212" />
    <path d="M29 48c-5 3-10 0-9-5 0-2 1-3 2-4l6-6c3-2 1-5 3-8 4-6 11-2 12 2 1 3 0 5-2 7z" fill="#121212" />
  </Tile>
);

const CubeIcon = (
  <svg viewBox="0 0 69 69" className="size-[69px] shrink-0" aria-hidden="true">
    <rect width="69" height="69" rx="4" fill="#1a1a1a" />
    <path d="M34.500 4L58 17l-9 5c-8-7-21-7-29 0l-9-5zM7 25l9 5c-2 12 4 20 15 23v11L7 50zM62 25l-9 5c2 12-4 20-15 23v11l24-14z" fill="#fff" />
    <circle cx="34.500" cy="35" r="8.500" fill="#fff" />
  </svg>
);

const GemIcon = (
  <Tile fill="#000">
    <path d="M28 8l17 10v20L28 48 11 38V18z" fill="#77787a" />
    <path d="M11 18h34L28 8z" fill="#3c3d3f" />
    <path d="M11 18h34L28 48V28z" fill="#f3f3f3" />
    <path d="M45 18L28 48l17-10z" fill="#b9babc" />
    <path d="M11 18l17 10-17 10z" fill="#9a9b9d" />
  </Tile>
);

const FolderIcon = (
  <svg viewBox="0 0 58 72" className="h-[72px] w-[58px] shrink-0" aria-hidden="true">
    <path d="M3 4h10V1h24v3h18v24H3z" fill="#f1f1f2" />
    <path d="M0 17a3 3 0 0 1 3-3h16l6 5h30a3 3 0 0 1 3 3v10H0z" fill="#4c9cd9" />
    <rect y="23" width="58" height="48" rx="3" fill="#79c6f7" />
    <path d="M1 66.500h56" stroke="#5fb0e6" strokeWidth="1.500" />
  </svg>
);

const StackIcon = (
  <svg viewBox="0 0 58 58" className="size-[58px] shrink-0" aria-hidden="true">
    <rect x="6" y="1" width="46" height="20" fill="#3a1d16" stroke="#fff" strokeWidth="2" />
    <rect x="4" y="6" width="50" height="20" fill="#3a1d16" stroke="#fff" strokeWidth="2" />
    <rect x="1" y="11" width="56" height="45" fill="#1f3a80" stroke="#fff" strokeWidth="2" />
    <rect x="2" y="12" width="54" height="9" fill="#20222a" />
    <rect x="3" y="22" width="12" height="27" fill="#141a2c" />
    <rect x="42" y="22" width="13" height="27" fill="#141a2c" />
    <rect x="3" y="33" width="11" height="2" fill="#4da154" />
    <rect x="43" y="27" width="12" height="2" fill="#8739df" />
    <rect x="42" y="43" width="13" height="6" fill="#4da154" />
    <rect x="9" y="24" width="4" height="2" fill="#cb3a31" />
  </svg>
);

const MiniWindowIcon = (
  <svg viewBox="0 0 66 62" className="h-[62px] w-[66px] shrink-0" aria-hidden="true">
    <rect width="65" height="49" fill="#1e1f20" />
    <rect width="14" height="49" fill="#4a4341" />
    <rect y="5" width="14" height="3" fill="#3e86ee" />
    <path d="M3 12h9M3 17h9M3 22h9M3 27h9M3 32h9M3 37h9M3 42h9" stroke="#b5b0ae" strokeWidth="1" />
    <path d="M52 8h12M50 10h14M60 17h4M58 24h6M62 30h2" stroke="#5fce5c" strokeWidth="1.500" />
    <rect x="43" y="37" width="21" height="25" rx="5" fill="#5fce55" />
    <ellipse cx="53.500" cy="49" rx="8" ry="8" fill="#eef7ec" />
  </svg>
);

const TrashIcon = (
  <svg viewBox="0 0 52 78" className="h-[78px] w-[52px] shrink-0" aria-hidden="true">
    <defs>
      <linearGradient id="bin" x1="0" y1="0" x2="1" y2="0">
        <stop offset="0" stopColor="#63686b" /><stop offset=".4" stopColor="#9b9fa1" /><stop offset="1" stopColor="#5d6163" />
      </linearGradient>
    </defs>
    <path d="M4 10l6-6 8 3 6-6 8 4 7-4 9 9-6 7H8z" fill="#e7e6e4" />
    <path d="M12 8l6 5M24 5l-4 9M34 5l5 8M28 9l8 6M40 6l-6 8" stroke="#5b5550" strokeWidth="1.500" />
    <path d="M18 9l6 3" stroke="#2fa8c8" strokeWidth="2" />
    <path d="M1 9c8 9 42 9 50 0l-5 58c-1 9-39 9-40 0z" fill="url(#bin)" />
    <path d="M1 9c8 9 42 9 50 0" fill="none" stroke="#c7cacb" strokeWidth="1.500" />
  </svg>
);

type DockApp = { name: string; icon: React.ReactNode; badge?: string; running?: boolean };

const dockApps: DockApp[] = [
  { name: "Finder", icon: FinderIcon, running: true },
  { name: "Launchpad", icon: LaunchpadIcon },
  { name: "Calendar", icon: CalendarDock },
  { name: "Reminders", icon: RemindersIcon, badge: "18" },
  { name: "Photos", icon: PhotosIcon },
  { name: "Nvidia", icon: NvidiaIcon },
  { name: "Music", icon: MusicIcon, running: true },
  { name: "Word", icon: WordIcon },
  { name: "Chrome", icon: ChromeIcon, running: true },
  { name: "Notes", icon: NotesIcon, running: true },
  { name: "System Settings", icon: SettingsIcon, badge: "2" },
  { name: "OBS", icon: ObsIcon },
  { name: "Messages", icon: MessagesIcon, badge: "131", running: true },
  { name: "iPhone Mirroring", icon: PhoneIcon, running: true },
  { name: "Keyboard", icon: KeysIcon, running: true },
  { name: "Live", icon: LiveIcon },
  { name: "Coil", icon: CoilIcon },
  { name: "Links", icon: SLogoIcon },
  { name: "Cube", icon: CubeIcon },
  { name: "Cursor", icon: GemIcon },
];

const dockFiles: DockApp[] = [
  { name: "Downloads", icon: FolderIcon },
  { name: "Screenshots", icon: StackIcon },
  { name: "Messages window", icon: MiniWindowIcon },
  { name: "Trash", icon: TrashIcon },
];

function DockItem({ app }: { app: DockApp }) {
  return (
    <button aria-label={app.name} className="relative flex w-[74px] shrink-0 items-center justify-center">
      {app.icon}
      {app.badge && (
        <span className="absolute top-1 right-0 flex h-7 min-w-7 items-center justify-center rounded-full bg-[#dd4b3e] px-0.5 text-[18px] text-white">
          {app.badge}
        </span>
      )}
      {app.running && <span className="absolute -bottom-1 size-2 rounded-full bg-[#bc9aa6]" />}
    </button>
  );
}

function Dock() {
  return (
    <footer className="relative flex h-[104px] shrink-0 justify-center">
      <div className="absolute top-0 right-[8%] left-[191px] flex h-[27px] overflow-hidden rounded-b-[24px] border-2 border-t-0 border-[#3a3532] bg-[#100e0d]">
        <div className="w-[400px] border-r-2 border-black bg-[#17120f] pl-[70px] text-2xl leading-8 whitespace-nowrap text-[#6f6a67]">
          <p className="-mt-[18px]">10/06/2025&nbsp; Hi's a com</p>
        </div>
      </div>
      <div className="relative mt-0.5 flex h-[92px] rounded-[32px] border-2 border-[#6b5058] bg-[linear-gradient(to_right,#331a20_0%,#3a1a26_25%,#431d1d_36%,#331820_52%,#371627_68%,#451d33_80%,#43202a_100%)] px-1 pb-1.5">
        {dockApps.map((a) => (
          <DockItem key={a.name} app={a} />
        ))}
        <span className="mx-[15px] mt-2.5 h-[68px] w-0.5 rounded-full bg-[#7f6272]" />
        {dockFiles.map((a) => (
          <DockItem key={a.name} app={a} />
        ))}
      </div>
    </footer>
  );
}

export default function App() {
  return (
    <div className="flex h-screen flex-col overflow-hidden bg-[linear-gradient(to_right,#03111c_0%,#04101b_20%,#2a0616_22%,#3c0e2b_34%,#40100f_35%,#43101a_44%,#3d0822_45%,#32062a_60%,#4d1840_70%,#2c0518_72%,#430e27_76%,#4c1420_86%,#7d2412_100%)] font-['Inter',sans-serif] antialiased">
      <MenuBar />
      <div className="h-0.5 shrink-0 bg-[linear-gradient(to_right,#04162a_22.500%,#c98a3a_22.600%,#c0402a_45%,#a03024_72%,#0a1a30_77%)]" />
      <div className="relative flex min-h-0 flex-1 flex-col overflow-hidden rounded-[20px] bg-black">
        <TabStrip />
        <Toolbar />
        <GamePage />
        <div className="pointer-events-none absolute inset-0 rounded-[20px] border-2 border-white/25" />
      </div>
      <Dock />
    </div>
  );
}
